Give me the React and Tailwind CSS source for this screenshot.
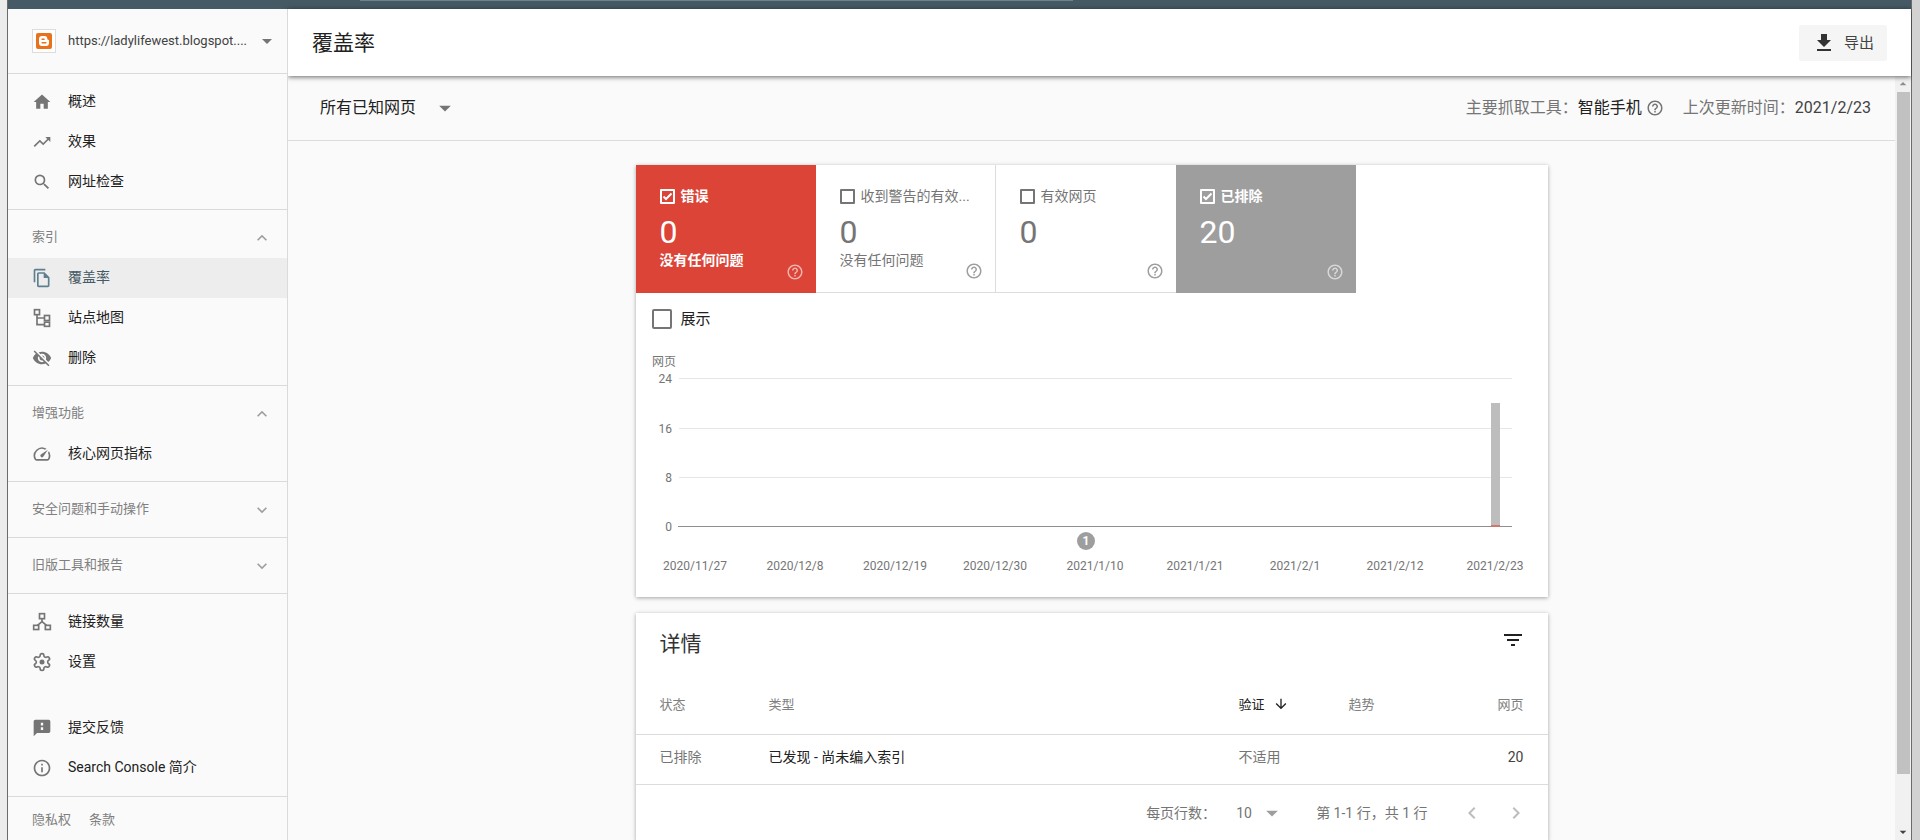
import React, { useState } from 'react';
import {
  MdHome,
  MdTrendingUp,
  MdSearch,
  MdOutlineFileCopy,
  MdVisibilityOff,
  MdOutlineSpeed,
  MdInfoOutline,
  MdKeyboardArrowUp,
  MdKeyboardArrowDown,
  MdArrowDropDown,
  MdArrowDropUp,
  MdGetApp,
  MdHelpOutline,
  MdFilterList,
  MdArrowDownward,
  MdChevronLeft,
  MdChevronRight,
} from 'react-icons/md';

const SitemapIcon = ({ className }) => (
  <svg viewBox="0 0 24 24" fill="none" stroke="currentColor" strokeWidth="2" className={className}>
    <rect x="3" y="2" width="6" height="6" />
    <rect x="15" y="9" width="6" height="6" />
    <rect x="15" y="17" width="6" height="5" />
    <path d="M6 8v12h9M6 12h9" />
  </svg>
);

const LinksIcon = ({ className }) => (
  <svg viewBox="0 0 24 24" fill="none" stroke="currentColor" strokeWidth="2" className={className}>
    <rect x="9" y="2" width="6" height="6" />
    <rect x="2" y="16" width="6" height="5" />
    <rect x="16" y="16" width="6" height="5" />
    <path d="M12 8v4M12 11.5L6.5 16M12 11.5l5.5 4.5" />
  </svg>
);

const SettingsIcon = ({ className }) => (
  <svg viewBox="0 0 24 24" fill="none" stroke="currentColor" strokeWidth="2" className={className}>
    <path d="M12.22 2h-.44a2 2 0 0 0-2 2v.18a2 2 0 0 1-1 1.73l-.43.25a2 2 0 0 1-2 0l-.15-.08a2 2 0 0 0-2.73.73l-.22.38a2 2 0 0 0 .73 2.73l.15.1a2 2 0 0 1 1 1.72v.51a2 2 0 0 1-1 1.74l-.15.09a2 2 0 0 0-.73 2.73l.22.38a2 2 0 0 0 2.73.73l.15-.08a2 2 0 0 1 2 0l.43.25a2 2 0 0 1 1 1.73V20a2 2 0 0 0 2 2h.44a2 2 0 0 0 2-2v-.18a2 2 0 0 1 1-1.73l.43-.25a2 2 0 0 1 2 0l.15.08a2 2 0 0 0 2.73-.73l.22-.39a2 2 0 0 0-.73-2.73l-.15-.08a2 2 0 0 1-1-1.74v-.5a2 2 0 0 1 1-1.74l.15-.09a2 2 0 0 0 .73-2.73l-.22-.38a2 2 0 0 0-2.73-.73l-.15.08a2 2 0 0 1-2 0l-.43-.25a2 2 0 0 1-1-1.73V4a2 2 0 0 0-2-2z" />
    <circle cx="12" cy="12" r="3" fill="currentColor" stroke="none" />
  </svg>
);

const FeedbackIcon = ({ className }) => (
  <svg viewBox="0 0 24 24" fill="currentColor" className={className}>
    <path fillRule="evenodd" d="M4 2h16a2 2 0 0 1 2 2v12a2 2 0 0 1-2 2H6l-4 4V4a2 2 0 0 1 2-2zm6.6 3.6v3.4h2.8V5.6zm0 5.4v3.4h2.8V11z" />
  </svg>
);

const BloggerIcon = () => (
  <span className="flex size-6 shrink-0 items-center justify-center border border-[#dcdcdc] bg-white">
    <svg viewBox="0 0 16 16" className="size-4">
      <rect width="16" height="16" rx="2" fill="#e8711c" />
      <path
        fill="#fff"
        fillRule="evenodd"
        d="M6 3h2.5A2.8 2.8 0 0 1 11.3 5.8c0 .7.3 1 .9 1 .5 0 .8.3.8.8V10a3 3 0 0 1-3 3H6a3 3 0 0 1-3-3V6a3 3 0 0 1 3-3zm.1 2.5a.7.7 0 0 0 0 1.4h2a.7.7 0 0 0 0-1.4zm0 3.600a.7.7 0 0 0 0 1.400h3.800a.7.7 0 0 0 0-1.400z"
      />
    </svg>
  </span>
);

const sections = [
  {
    items: [
      { icon: MdHome, label: '概述' },
      { icon: MdTrendingUp, label: '效果' },
      { icon: MdSearch, label: '网址检查' },
    ],
  },
  {
    title: '索引',
    open: true,
    items: [
      { icon: MdOutlineFileCopy, label: '覆盖率', active: true },
      { icon: SitemapIcon, label: '站点地图' },
      { icon: MdVisibilityOff, label: '删除' },
    ],
  },
  {
    title: '增强功能',
    open: true,
    items: [{ icon: MdOutlineSpeed, label: '核心网页指标' }],
  },
  { title: '安全问题和手动操作', items: [] },
  { title: '旧版工具和报告', items: [] },
];

const NavItem = ({ icon: Icon, label, active }) => (
  <a
    href="#"
    className={
      active
        ? 'flex h-10 items-center gap-4 bg-[#ededed] pl-6 text-sm text-[#455a64]'
        : 'flex h-10 items-center gap-4 pl-6 text-sm text-[#212121]'
    }
  >
    <Icon className={active ? 'size-5 text-[#5f7f8f]' : 'size-5 text-[#757575]'} />
    <span className="pb-0.5">{label}</span>
  </a>
);

function Sidebar() {
  return (
    <nav className="relative z-20 flex w-[280px] shrink-0 flex-col border-r border-[#dadada] bg-[#fafafa]">
      <button className="flex h-[65px] shrink-0 items-center border-b border-[#dadada] pr-2 pl-6">
        <BloggerIcon />
        <span className="ml-3 flex-1 text-left text-[13px] text-[#424242]">https://ladylifewest.blogspot....</span>
        <MdArrowDropDown className="size-6 text-[#757575]" />
      </button>

      {sections.map((section, i) => (
        <div key={i} className="border-b border-[#dadada] pt-2 pb-[7px]">
          {section.title && (
            <button className="flex h-10 w-full items-center justify-between pr-[15px] pl-6 text-[13px] text-[#808080]">
              <span className="pb-0.5">{section.title}</span>
              {section.open ? (
                <MdKeyboardArrowUp className="size-5 text-[#9e9e9e]" />
              ) : (
                <MdKeyboardArrowDown className="size-5 text-[#9e9e9e]" />
              )}
            </button>
          )}
          {section.items.map((item) => (
            <NavItem key={item.label} {...item} />
          ))}
        </div>
      ))}

      <div className="pt-2">
        <NavItem icon={LinksIcon} label="链接数量" />
        <NavItem icon={SettingsIcon} label="设置" />
      </div>
      <div className="mt-[18px] border-b border-[#dadada] py-2">
        <NavItem icon={FeedbackIcon} label="提交反馈" />
        <NavItem icon={MdInfoOutline} label="Search Console 简介" />
      </div>
      <div className="flex h-[45px] shrink-0 items-center gap-[18px] pl-6 text-[13px] text-[#808080]">
        <a href="#">隐私权</a>
        <a href="#">条款</a>
      </div>
    </nav>
  );
}

const tiles = [
  {
    label: '错误',
    value: 0,
    note: '没有任何问题',
    checked: true,
    box: 'bg-[#db4437] text-white',
    border: 'border-white',
    help: 'text-white/60',
  },
  {
    label: '收到警告的有效...',
    value: 0,
    note: '没有任何问题',
    box: 'border-r border-b border-[#dcdcdc] text-[#757575]',
    border: 'border-[#757575]',
    help: 'text-[#9e9e9e]',
  },
  {
    label: '有效网页',
    value: 0,
    box: 'border-b border-[#dcdcdc] text-[#757575]',
    border: 'border-[#757575]',
    help: 'text-[#9e9e9e]',
  },
  {
    label: '已排除',
    value: 20,
    checked: true,
    box: 'bg-[#9e9e9e] text-white',
    border: 'border-white',
    help: 'text-white/60',
  },
];

function Tile({ label, value, note, checked, box, border, help }) {
  const [on, setOn] = useState(!!checked);

  return (
    <div className={`relative h-32 w-[180px] pt-[19px] pl-6 ${box}`}>
      <label className={`flex h-6 items-center gap-1.5 text-sm whitespace-nowrap ${checked ? 'font-bold' : ''}`}>
        <span className="relative size-[15px]">
          <input
            type="checkbox"
            checked={on}
            onChange={() => setOn(!on)}
            className={`block size-[15px] appearance-none rounded-[1px] border-2 ${border}`}
          />
          {on && (
            <svg viewBox="0 0 15 15" className="pointer-events-none absolute inset-0" fill="none" stroke="currentColor" strokeWidth="2">
              <path d="M3.5 7.500l2.500 2.500 5.500-5.500" />
            </svg>
          )}
        </span>
        {label}
      </label>
      <div className="h-11 text-[32px] leading-[48px]">{value}</div>
      <div className={`text-sm leading-4 ${checked ? 'font-bold' : ''}`}>{note}</div>
      <MdHelpOutline className={`absolute right-3 bottom-3 size-[18px] ${help}`} />
    </div>
  );
}

const gridLines = [
  { value: 24, y: 28 },
  { value: 16, y: 78 },
  { value: 8, y: 127 },
];
const dates = [
  '2020/11/27',
  '2020/12/8',
  '2020/12/19',
  '2020/12/30',
  '2021/1/10',
  '2021/1/21',
  '2021/2/1',
  '2021/2/12',
  '2021/2/23',
];

function Chart() {
  return (
    <svg viewBox="0 0 912 247" className="block w-full text-xs" fill="#757575">
      <text x="16" y="16">网页</text>
      {gridLines.map(({ value, y }) => (
        <g key={value}>
          <text x="36" y={y + 5} textAnchor="end">{value}</text>
          <rect x="43" y={y} width="833" height="1" fill="#e6e6e6" />
        </g>
      ))}
      <text x="36" y="181" textAnchor="end">0</text>
      <rect x="855" y="53" width="9" height="123" fill="#bdbdbd" />
      <rect x="42" y="176" width="834" height="1" fill="#8e8e8e" />
      <rect x="855" y="175" width="9" height="2" fill="#d0766e" />

      {/* Event marker */}
      <circle cx="450" cy="191" r="9" fill="#9e9e9e" />
      <text x="450" y="195" textAnchor="middle" fill="#fff" className="font-bold">1</text>

      {dates.map((date, i) => (
        <text key={date} x={59 + i * 100} y="220" textAnchor="middle">{date}</text>
      ))}
    </svg>
  );
}

function Details() {
  return (
    <section className="mt-4 w-full max-w-[912px] bg-white shadow-[0_1px_4px_rgba(0,0,0,0.35)]">
      <div className="flex h-[62px] items-center justify-between pr-[23px] pl-6">
        <h2 className="pt-px text-[21px] text-[#333]">详情</h2>
        <button aria-label="过滤" className="mb-2">
          <MdFilterList className="size-6 text-[#212121]" />
        </button>
      </div>
      <table className="w-full table-fixed text-left">
        <thead>
          <tr className="h-[59px] border-b border-[#dcdcdc] text-[13px] text-[#808080]">
            <th className="w-[133px] pl-6 font-normal">状态</th>
            <th className="font-normal">类型</th>
            <th className="w-[110px] font-normal text-[#212121]" aria-sort="descending">
              <span className="flex items-center gap-2">
                验证
                <MdArrowDownward className="size-4" />
              </span>
            </th>
            <th className="w-[110px] font-normal">趋势</th>
            <th className="w-[89px] pr-6 text-right font-normal">网页</th>
          </tr>
        </thead>
        <tbody>
          <tr className="h-[50px] border-b border-[#dcdcdc] text-sm text-[#757575]">
            <td className="pb-1 pl-6">已排除</td>
            <td className="pb-1 text-[#212121]">已发现 - 尚未编入索引</td>
            <td className="pb-1">不适用</td>
            <td></td>
            <td className="pr-6 pb-1 text-right text-[#424242]">20</td>
          </tr>
        </tbody>
      </table>
      <div className="flex h-14 items-center justify-end pr-5 text-sm text-[#757575]">
        <label htmlFor="rows">每页行数：</label>
        <span className="relative ml-5 flex w-11 items-center">
          <select id="rows" className="w-full appearance-none text-sm">
            <option>10</option>
          </select>
          <MdArrowDropDown className="pointer-events-none absolute -right-1.5 size-7 text-[#9e9e9e]" />
        </span>
        <span className="ml-9">第 1-1 行，共 1 行</span>
        <button aria-label="上一页" className="ml-8">
          <MdChevronLeft className="size-6 text-[#bdbdbd]" />
        </button>
        <button aria-label="下一页" className="ml-5">
          <MdChevronRight className="size-6 text-[#bdbdbd]" />
        </button>
      </div>
    </section>
  );
}

function App() {
  return (
    <div className="flex h-screen overflow-hidden border-r-8 border-l-[7px] border-r-[#d2d2d2] border-l-[#ececec] font-['Roboto','Noto_Sans_CJK_SC',sans-serif]">
      <div className="flex min-w-0 flex-1 flex-col border-x border-[#6b6b6b] bg-[#fafafa]">
        <div className="h-[9px] shrink-0 bg-[#455a64]">
          {/* Bottom edge of the search field */}
          <div className="ml-[352px] h-px w-[713px] bg-[#6f8189]" />
        </div>

        <div className="flex min-h-0 flex-1">
          <Sidebar />

          <div className="flex min-w-0 flex-1 flex-col">
            <header className="z-10 flex h-[67px] shrink-0 items-center justify-between bg-white pr-6 pl-6 shadow-[0_1px_5px_rgba(0,0,0,0.6)]">
              <h1 className="pt-0.5 text-[21px] text-[#212121]">覆盖率</h1>
              <button className="flex h-9 items-center gap-2 rounded-xs bg-[#f5f5f5] px-[13px] text-[15px] text-[#424242]">
                <MdGetApp className="size-6 text-[#333]" />
                <span className="pt-0.5">导出</span>
              </button>
            </header>

            <div className="flex min-h-0 flex-1">
              <main className="flex min-w-0 flex-1 flex-col">
                <div className="flex h-[65px] shrink-0 items-center justify-between border-b border-[#dcdcdc] pr-6 pl-8 text-base">
                  <span className="relative flex w-[139px] items-center">
                    <select aria-label="网页" className="w-full appearance-none text-[#212121]">
                      <option>所有已知网页</option>
                    </select>
                    <MdArrowDropDown className="pointer-events-none absolute right-0 size-7 text-[#757575]" />
                  </span>
                  <div className="flex items-center text-[#757575]">
                    主要抓取工具：
                    <span className="text-[#212121]">智能手机</span>
                    <MdHelpOutline className="mr-[19px] ml-1 size-[18px]" />
                    上次更新时间：
                    <span className="text-[#424242]">2021/2/23</span>
                  </div>
                </div>

                <div className="flex min-h-0 flex-1 flex-col items-center overflow-hidden pt-6">
                  <section className="w-full max-w-[912px] shrink-0 bg-white shadow-[0_1px_4px_rgba(0,0,0,0.35)]">
                    <div className="flex">
                      {tiles.map((tile) => (
                        <Tile key={tile.label} {...tile} />
                      ))}
                    </div>
                    <label className="mt-4 mb-[21px] flex h-5 items-center gap-[9px] pl-4 text-[15px] text-[#212121]">
                      <input type="checkbox" className="size-5 appearance-none rounded-xs border-2 border-[#757575]" />
                      展示
                    </label>
                    <Chart />
                  </section>
                  <Details />
                </div>
              </main>

              {/* Scroll bar */}
              <div className="flex w-4 shrink-0 flex-col items-center bg-[#f1f1f1]">
                <MdArrowDropUp className="size-4 shrink-0 text-[#8e8e8e]" />
                <div className="h-[682px] w-[13px] bg-[#c1c1c1]" />
                <MdArrowDropDown className="mt-auto size-4 shrink-0 text-[#424242]" />
              </div>
            </div>
          </div>
        </div>
      </div>
    </div>
  );
}

export default App;
